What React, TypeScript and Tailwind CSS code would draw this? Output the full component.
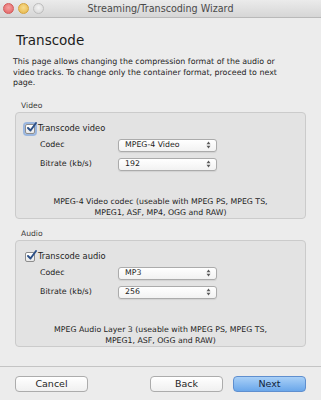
import React from "react";

function Arrows() {
  return (
    <svg width="5" height="8" viewBox="0 0 5 8" className="shrink-0">
      <path d="M0.5 3.2L2.5 0.6L4.5 3.2Z" fill="#5a5a5a" />
      <path d="M0.5 4.8L2.5 7.4L4.5 4.8Z" fill="#5a5a5a" />
    </svg>
  );
}

function Select({ value }: { value: string }) {
  return (
    <div className="flex h-[13px] w-[99px] items-center justify-between rounded-[3px] border border-[#ababab] bg-gradient-to-b from-white to-[#f2f2f2] pl-[6px] pr-[5px] shadow-[0_1px_1px_rgba(0,0,0,0.08)]">
      <span className="text-[7.8px] leading-none text-[#1e1e1e]">{value}</span>
      <Arrows />
    </div>
  );
}

function Checkbox({ focused }: { focused?: boolean }) {
  return (
    <div
      className={
        "relative h-[10px] w-[10px] shrink-0 rounded-[2px] border border-[#8d8d8d] bg-gradient-to-b from-white to-[#e8e8e8] " +
        (focused ? "shadow-[0_0_0_2px_rgba(95,145,220,0.55)]" : "")
      }
    >
      <svg width="12" height="11" viewBox="0 0 12 11" className="absolute -top-[3px] left-[0px]">
        <path d="M2 6L4.5 8.5L10 1" stroke="#2b4f86" strokeWidth="1.9" fill="none" strokeLinecap="round" strokeLinejoin="round" />
      </svg>
    </div>
  );
}

function Group({
  title,
  check,
  codec,
  bitrate,
  desc,
  focused,
}: {
  title: string;
  check: string;
  codec: string;
  bitrate: string;
  desc: string[];
  focused?: boolean;
}) {
  return (
    <div className="mx-[15px]">
      <div className="h-[11px] pl-[6px] text-[7.6px] leading-[11px] text-[#3a3a3a]">{title}</div>
      <div className="mt-[1px] h-[107px] rounded-[4px] border border-[#cbcbcb] bg-[#e3e3e3] pl-[9px] pt-[11px]">
        <div className="flex h-[10px] items-center gap-[3px]">
          <Checkbox focused={focused} />
          <span className="text-[8.3px] leading-none text-[#1e1e1e]">{check}</span>
        </div>
        <div className="mt-[5px] flex h-[13px] items-center pl-[15px]">
          <span className="w-[78px] text-[7.9px] leading-none text-[#1e1e1e]">Codec</span>
          <Select value={codec} />
        </div>
        <div className="mt-[6px] flex h-[13px] items-center pl-[15px]">
          <span className="w-[78px] text-[7.9px] leading-none text-[#1e1e1e]">Bitrate (kb/s)</span>
          <Select value={bitrate} />
        </div>
        <div className="mt-[25px] pr-[9px] text-center text-[7.8px] leading-[11px] text-[#1e1e1e]">
          {desc.map((d) => (
            <div key={d}>{d}</div>
          ))}
        </div>
      </div>
    </div>
  );
}

function Button({ label, primary }: { label: string; primary?: boolean }) {
  return (
    <div
      className={
        "flex h-[16px] w-[73px] items-center justify-center rounded-[4px] border text-[9.5px] leading-none " +
        (primary
          ? "border-[#5f8fcf] bg-gradient-to-b from-[#a9d0f7] to-[#6aa7ea] text-[#12243c]"
          : "border-[#acacac] bg-gradient-to-b from-white to-[#f0f0f0] text-[#1e1e1e]")
      }
    >
      {label}
    </div>
  );
}

export default function App() {
  return (
    <div className="h-[400px] w-[321px] overflow-hidden bg-[#ececec] font-['DejaVu_Sans',sans-serif]">
      {/* title bar */}
      <div className="relative flex h-[18px] items-center justify-center border-b border-[#b9b9b9] bg-gradient-to-b from-[#ebebeb] to-[#d6d6d6]">
        <div className="absolute left-[3px] top-[3px] flex gap-[4px]">
          <span className="h-[11px] w-[11px] rounded-full border border-[#d25b5b] bg-[radial-gradient(circle_at_50%_40%,#f4a0a0,#e15f5f)]" />
          <span className="h-[11px] w-[11px] rounded-full border border-[#d4a43f] bg-[radial-gradient(circle_at_50%_40%,#f7dc8d,#e6b446)]" />
          <span className="h-[11px] w-[11px] rounded-full border border-[#bdbdbd] bg-[radial-gradient(circle_at_50%_40%,#f4f4f4,#d4d4d4)]" />
        </div>
        <span className="text-[9.6px] leading-none text-[#4a4a4a]">Streaming/Transcoding Wizard</span>
      </div>

      <div className="mt-[14px] h-[16px] pl-[16px] text-[13.5px] leading-[16px] text-[#1c1c1c]">Transcode</div>

      <p className="mt-[9px] whitespace-nowrap pl-[13px] text-[7.9px] leading-[10.5px] text-[#1e1e1e]">
        This page allows changing the compression format of the audio or
        <br />
        video tracks. To change only the container format, proceed to next
        <br />
        page.
      </p>

      <div className="mt-[11px]">
        <Group
          title="Video"
          check="Transcode video"
          codec="MPEG-4 Video"
          bitrate="192"
          focused
          desc={["MPEG-4 Video codec (useable with MPEG PS, MPEG TS,", "MPEG1, ASF, MP4, OGG and RAW)"]}
        />
      </div>

      <div className="mt-[9px]">
        <Group
          title="Audio"
          check="Transcode audio"
          codec="MP3"
          bitrate="256"
          desc={["MPEG Audio Layer 3 (useable with MPEG PS, MPEG TS,", "MPEG1, ASF, OGG and RAW)"]}
        />
      </div>

      <div className="mt-[19px] border-t border-[#c4c4c4]" />

      <div className="mt-[9px] flex px-[15px]">
        <Button label="Cancel" />
        <div className="ml-auto flex gap-[10px]">
          <Button label="Back" />
          <Button label="Next" primary />
        </div>
      </div>
    </div>
  );
}
